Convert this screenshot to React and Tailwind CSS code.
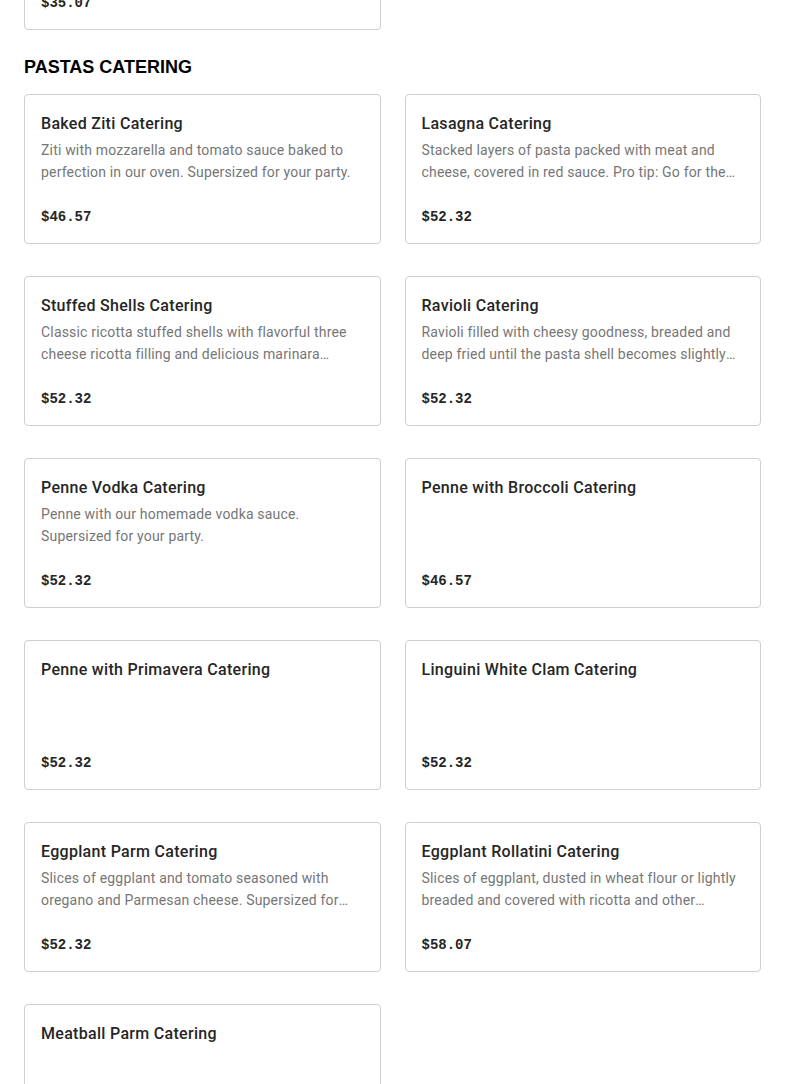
const items = [
  {
    name: "Baked Ziti Catering",
    desc: "Ziti with mozzarella and tomato sauce baked to perfection in our oven. Supersized for your party.",
    price: "$46.57",
  },
  {
    name: "Lasagna Catering",
    desc: "Stacked layers of pasta packed with meat and cheese, covered in red sauce. Pro tip: Go for the meat sauce. Supersized for your party.",
    price: "$52.32",
  },
  {
    name: "Stuffed Shells Catering",
    desc: "Classic ricotta stuffed shells with flavorful three cheese ricotta filling and delicious marinara sauce. Supersized for your party.",
    price: "$52.32",
  },
  {
    name: "Ravioli Catering",
    desc: "Ravioli filled with cheesy goodness, breaded and deep fried until the pasta shell becomes slightly crispy. Supersized for your party.",
    price: "$52.32",
  },
  {
    name: "Penne Vodka Catering",
    desc: "Penne with our homemade vodka sauce. Supersized for your party.",
    price: "$52.32",
  },
  { name: "Penne with Broccoli Catering", desc: "", price: "$46.57" },
  { name: "Penne with Primavera Catering", desc: "", price: "$52.32" },
  { name: "Linguini White Clam Catering", desc: "", price: "$52.32" },
  {
    name: "Eggplant Parm Catering",
    desc: "Slices of eggplant and tomato seasoned with oregano and Parmesan cheese. Supersized for your party.",
    price: "$52.32",
  },
  {
    name: "Eggplant Rollatini Catering",
    desc: "Slices of eggplant, dusted in wheat flour or lightly breaded and covered with ricotta and other cheeses. Supersized for your party.",
    price: "$58.07",
  },
  { name: "Meatball Parm Catering", desc: "", price: "$52.32" },
];

function ItemCard({ name, desc, price }) {
  return (
    <div className="flex h-[150px] flex-col rounded border border-[#cfcfcf] bg-white px-4 pt-[17px] pb-4">
      {name ? (
        <h3 className="text-[16px] leading-6 font-medium tracking-[0.3px] text-[#262626]">{name}</h3>
      ) : null}
      {desc ? (
        <p className="mt-[3px] line-clamp-2 text-[14px] leading-[22px] tracking-[0.18px] text-[#767676]">{desc}</p>
      ) : null}
      <div className="mt-auto font-['Liberation_Mono',monospace] text-[14px] leading-5 font-bold text-[#262626]">
        {price}
      </div>
    </div>
  );
}

export default function App() {
  return (
    <div className="min-h-screen overflow-hidden bg-white font-['Roboto',sans-serif] px-6">
      <div className="-mt-[120px] grid grid-cols-2 gap-x-6 gap-y-8">
        <ItemCard name="" desc="" price="$35.07" />
      </div>

      <h2 className="mt-6 mb-[14px] font-['Liberation_Sans',Arial,sans-serif] text-[18px] leading-[26px] font-bold text-black">
        PASTAS CATERING
      </h2>

      <div className="grid grid-cols-2 gap-x-6 gap-y-8 pb-10">
        {items.map((item) => (
          <ItemCard key={item.name} {...item} />
        ))}
      </div>
    </div>
  );
}
